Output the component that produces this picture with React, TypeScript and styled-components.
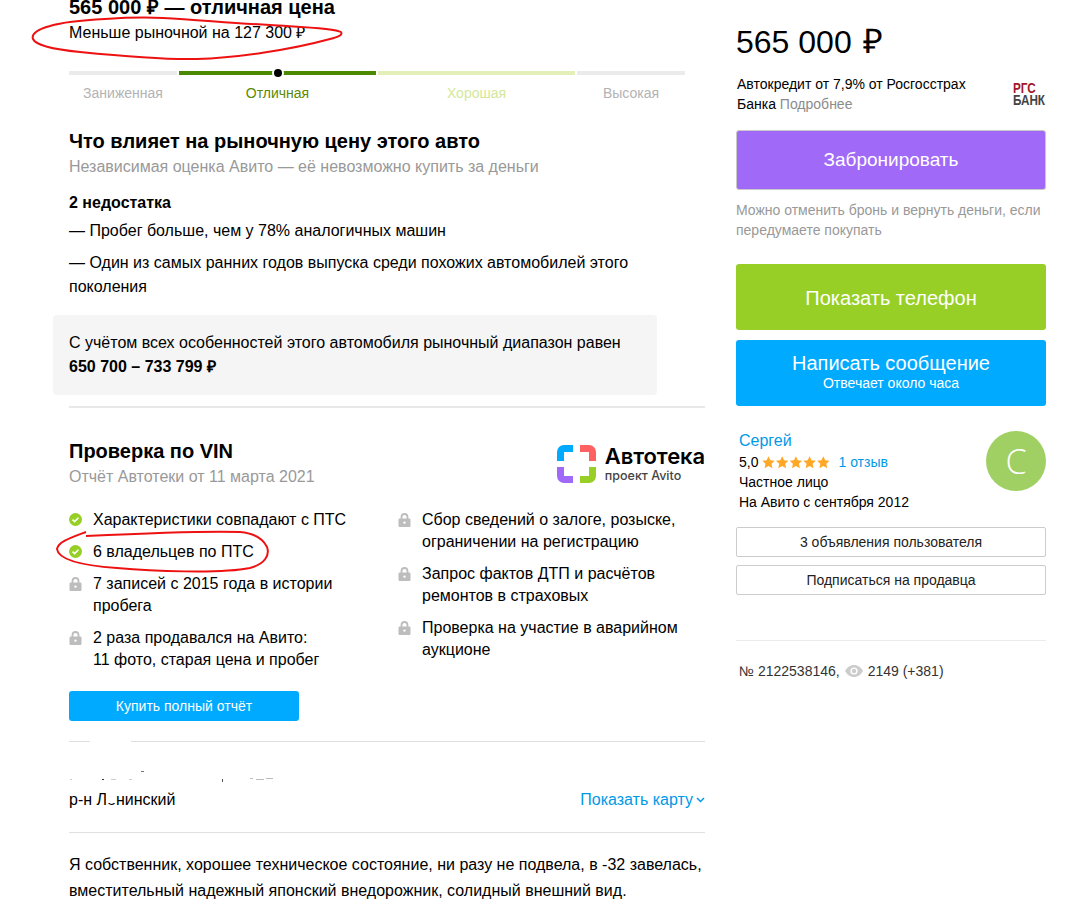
import React from "react";
import styled, { createGlobalStyle } from "styled-components";

const Global = createGlobalStyle`
  html, body { margin: 0; padding: 0; background: #fff; height: 922px; overflow: hidden; }
  body { font-family: "Liberation Sans", Arial, sans-serif; color: #000; }
  * { box-sizing: border-box; }
`;

const Page = styled.div`
  position: relative;
  width: 1089px;
  height: 922px;
  overflow: hidden;
  display: flex;
  align-items: flex-start;
  padding-left: 69px;
`;

const Left = styled.main`
  width: 636px;
  flex: none;
  margin-top: -7px;
`;

const Right = styled.aside`
  width: 310px;
  flex: none;
  margin-left: 31px;
  padding-top: 22px;
`;

const PriceTitle = styled.div`
  font-size: 20px;
  font-weight: 700;
  line-height: 28px;
`;

const PriceSub = styled.div`
  font-size: 16px;
  line-height: 22px;
  margin-top: 1px;
`;

const Scale = styled.div`
  display: grid;
  grid-template-columns: 108px 197px 197px 108px;
  column-gap: 2px;
  width: 616px;
  margin-top: 27px;
`;

const Segment = styled.div<{ $color: string; $text: string; $dot?: boolean }>`
  position: relative;
  text-align: center;
  color: ${(p) => p.$text};
  font-size: 14px;
  line-height: 18px;
  &::before {
    content: "";
    display: block;
    height: 4px;
    margin-bottom: 9px;
    background: ${(p) => p.$color};
  }
  ${(p) =>
    p.$dot &&
    `&::after {
      content: "";
      position: absolute;
      top: -2px;
      left: 95px;
      width: 8px;
      height: 8px;
      border-radius: 50%;
      background: #000;
      box-shadow: 0 0 0 2px #fff;
    }`}
`;

const SectionTitle = styled.h2`
  margin: 0;
  font-size: 20px;
  font-weight: 700;
  line-height: 28px;
`;

const Muted = styled.div`
  font-size: 16px;
  line-height: 22px;
  margin-top: 1px;
  color: #999;
`;

const InfluenceBlock = styled.section`
  margin-top: 25px;
`;

const FlawsTitle = styled.div`
  font-size: 16px;
  font-weight: 700;
  line-height: 22px;
  margin-top: 14px;
`;

const Flaw = styled.p`
  margin: 5px 0 0;
  font-size: 16px;
  line-height: 24px;
  &:last-of-type { margin-top: 8px; }
`;

const RangeBox = styled.div`
  margin: 16px 48px 0 -16px;
  height: 80px;
  padding: 16px 16px;
  background: #f5f5f5;
  border-radius: 4px;
  font-size: 16px;
  line-height: 24px;
`;

const RangeValue = styled.b`
  font-size: 16px;
`;

const ThickRule = styled.div`
  height: 2px;
  background: #e8e8e8;
  margin-top: 11px;
`;

const VinHead = styled.div`
  display: flex;
  justify-content: space-between;
  align-items: flex-start;
  margin-top: 29px;
`;

const LogoBox = styled.div`
  display: flex;
  align-items: center;
  gap: 9px;
  margin-top: 7px;
`;

const LogoText = styled.div`
  font-family: Inter, "Noto Sans", sans-serif;
`;

const LogoName = styled.div`
  font-size: 22px;
  font-weight: 600;
  line-height: 24px;
  letter-spacing: -0.1px;
`;

const LogoSub = styled.div`
  font-size: 12.5px;
  font-weight: 500;
  line-height: 15px;
  color: #444;
`;

const Checks = styled.div`
  display: grid;
  grid-template-columns: 329px 1fr;
  margin-top: 21px;
`;

const CheckCol = styled.ul`
  list-style: none;
  margin: 0;
  padding: 0;
  display: flex;
  flex-direction: column;
  gap: 10px;
`;

const CheckItem = styled.li`
  display: flex;
  gap: 11px;
  font-size: 16px;
  line-height: 22px;
  width: 300px;
  svg { flex: none; margin-top: 4px; }
`;

const BuyButton = styled.button`
  display: block;
  width: 230px;
  height: 30px;
  margin-top: 20px;
  border: 0;
  border-radius: 3px;
  background: #00aaff;
  color: #fff;
  font: 14px "Liberation Sans", Arial, sans-serif;
  padding: 0;
`;

const Rule = styled.div`
  height: 1px;
  background: #e0e0e0;
`;

const BuyRule = styled(Rule)`
  margin-top: 20px;
`;

const AddressRow = styled.div`
  position: relative;
  display: flex;
  justify-content: space-between;
  align-items: center;
  margin-top: 47px;
  font-size: 16px;
  line-height: 22px;
`;

const MapLink = styled.a`
  color: #0099e6;
  font-size: 16px;
  display: inline-flex;
  align-items: center;
  gap: 3px;
`;

const AddressRule = styled(Rule)`
  margin-top: 21px;
`;

const Description = styled.p`
  margin: 19px 0 0;
  font-size: 16px;
  line-height: 26px;
`;

const BigPrice = styled.div`
  height: 40px;
  font-size: 32px;
  line-height: 40px;
`;

const BigRouble = styled.span`
  font-size: 34px;
  line-height: 0;
  margin-left: 2px;
`;

const CreditRow = styled.div`
  display: flex;
  justify-content: space-between;
  align-items: flex-start;
  margin-top: 12px;
`;

const CreditText = styled.div`
  width: 250px;
  font-size: 14px;
  line-height: 20px;
  margin-left: 1px;
  span { color: #8c8c8c; }
`;

const BankLogo = styled.div`
  margin: 8px 3px 0 0;
  flex: none;
  width: 30px;
  font-weight: 700;
  font-size: 15px;
  line-height: 12px;
  color: #444;
  white-space: nowrap;
  transform: scaleX(0.78);
  transform-origin: left top;
`;

const BankFirst = styled.div`
  color: #a3162a;
`;

const ActionButton = styled.button<{ $bg: string; $h: number; $size?: number }>`
  display: flex;
  flex-direction: column;
  align-items: center;
  justify-content: center;
  width: 310px;
  height: ${(p) => p.$h}px;
  border: 0;
  border-radius: 3px;
  background: ${(p) => p.$bg};
  color: #fff;
  font-family: "Liberation Sans", Arial, sans-serif;
  font-size: ${(p) => p.$size ?? 20}px;
  line-height: 24px;
  padding: 0;
`;

const ReserveButton = styled(ActionButton)`
  margin-top: 16px;
  border: 1px solid #c9c9c9;
`;

const ReserveNote = styled.div`
  margin-top: 10px;
  font-size: 14px;
  line-height: 20px;
  color: #999;
`;

const PhoneButton = styled(ActionButton)`
  margin-top: 24px;
  padding-top: 2px;
`;

const MessageButton = styled(ActionButton)`
  margin-top: 10px;
  padding-bottom: 4px;
`;

const MessageHint = styled.span`
  font-size: 14px;
  line-height: 16px;
`;

const Seller = styled.div`
  display: flex;
  justify-content: space-between;
  margin-top: 25px;
`;

const SellerInfo = styled.div`
  font-size: 14px;
  line-height: 20px;
  margin-left: 3px;
`;

const SellerName = styled.a`
  display: block;
  color: #0099e6;
  font-size: 16px;
  line-height: 20px;
  margin-bottom: 1px;
`;

const Rating = styled.div`
  display: flex;
  align-items: center;
  gap: 4px;
`;

const ReviewLink = styled.a`
  color: #0099e6;
  margin-left: 4px;
`;

const Avatar = styled.div`
  width: 60px;
  height: 60px;
  border-radius: 50%;
  background: #a0d063;
  color: #fff;
  display: flex;
  align-items: center;
  justify-content: center;
  font-family: "Open Sans", sans-serif;
  font-weight: 300;
  font-size: 34px;
`;

const OutlineButton = styled.button`
  display: block;
  width: 310px;
  height: 30px;
  border: 1px solid #ccc;
  border-radius: 2px;
  background: #fff;
  color: #222;
  font: 14px "Liberation Sans", Arial, sans-serif;
  padding: 0;
  margin-top: 8px;
`;

const SubscribeBlock = styled.div`
  margin-top: 15px;
  ${OutlineButton}:first-child { margin-top: 0; }
`;

const SideRule = styled.div`
  height: 1px;
  background: #ebebeb;
  margin-top: 45px;
`;

const Meta = styled.div`
  display: flex;
  align-items: center;
  gap: 5px;
  margin-top: 20px;
  margin-left: 3px;
  font-size: 14px;
  line-height: 20px;
  color: #333;
`;

const Annotation = styled.svg`
  position: absolute;
  left: 0;
  top: 0;
  pointer-events: none;
`;

const WhitePatch = styled.div<{ $x: number; $y: number; $w: number; $h: number }>`
  position: absolute;
  left: ${(p) => p.$x}px;
  top: ${(p) => p.$y}px;
  width: ${(p) => p.$w}px;
  height: ${(p) => p.$h}px;
  background: #fff;
`;

const CheckIcon = () => (
  <svg width="13" height="13" viewBox="0 0 13 13">
    <circle cx="6.5" cy="6.5" r="6.5" fill="#97cf26" />
    <path d="M3.6 6.6l2 2 3.8-3.8" fill="none" stroke="#fff" strokeWidth="1.6" />
  </svg>
);

const LockIcon = () => (
  <svg width="13" height="14" viewBox="0 0 13 14">
    <path d="M3.5 6V4a3 3 0 0 1 6 0v2" fill="none" stroke="#bdbdbd" strokeWidth="1.8" />
    <rect x="0.5" y="5.6" width="12" height="8.4" rx="1.2" fill="#bdbdbd" />
    <circle cx="6.5" cy="9.6" r="1.2" fill="#fff" />
  </svg>
);

const AutotekaIcon = () => (
  <svg width="39" height="38" viewBox="0 0 39 38" fill="none" strokeWidth="7">
    <path d="M16 3.5H7a3.5 3.5 0 0 0-3.5 3.5v9" stroke="#00aaff" />
    <path d="M23 3.5h9a3.5 3.5 0 0 1 3.5 3.5v9" stroke="#ff6163" />
    <path d="M3.5 22v9a3.5 3.5 0 0 0 3.5 3.5h9" stroke="#a169f7" />
    <path d="M35.5 22v9a3.5 3.5 0 0 1-3.5 3.5h-9" stroke="#97cf26" />
  </svg>
);

const Stars = () => (
  <svg width="68" height="13" viewBox="0 0 68 13">
    {[0, 1, 2, 3, 4].map((i) => (
      <path
        key={i}
        transform={`translate(${i * 13.7} 0)`}
        d="M6.5 0.3l1.9 4 4.3.5-3.2 3 .9 4.4-3.9-2.2-3.9 2.2.9-4.4-3.2-3 4.3-.5z"
        fill="#ffa726"
      />
    ))}
  </svg>
);

const EyeIcon = () => (
  <svg width="18" height="12" viewBox="0 0 18 12">
    <path d="M9 0C5 0 1.8 2.6 0 6c1.8 3.4 5 6 9 6s7.200-2.600 9-6c-1.800-3.400-5-6-9-6z" fill="#ccc" />
    <circle cx="9" cy="6" r="3.6" fill="#fff" />
    <circle cx="9" cy="6" r="2.2" fill="#ccc" />
  </svg>
);

const Chevron = () => (
  <svg width="9" height="6" viewBox="0 0 9 6">
    <path d="M1 1l3.500 3.500L8 1" fill="none" stroke="#0099e6" strokeWidth="1.500" />
  </svg>
);

const Remnants = () => (
  <g stroke="none">
    <rect x="70" y="779" width="2" height="1" fill="#ccc" />
    <rect x="102" y="779" width="2" height="1" fill="#333" />
    <rect x="111" y="779" width="5" height="1" fill="#ccc" />
    <rect x="129" y="779" width="3" height="1" fill="#ccc" />
    <rect x="141" y="771" width="3" height="1" fill="#777" />
    <rect x="222" y="779" width="1" height="3" fill="#555" />
    <rect x="250" y="778" width="3" height="1" fill="#bbb" />
    <rect x="256" y="779" width="8" height="1" fill="#bbb" />
    <rect x="266" y="778" width="7" height="1" fill="#bbb" />
  </g>
);

export default function App() {
  return (
    <Page>
      <Global />
      <Left>
        <PriceTitle>565 000 ₽ — отличная цена</PriceTitle>
        <PriceSub>Меньше рыночной на 127 300 ₽</PriceSub>
        <Scale>
          <Segment $color="#ebebeb" $text="#b3b3b3">Заниженная</Segment>
          <Segment $color="#4b8a00" $text="#5c8a00" $dot>Отличная</Segment>
          <Segment $color="#e2f0b8" $text="#d3e89a">Хорошая</Segment>
          <Segment $color="#ebebeb" $text="#b3b3b3">Высокая</Segment>
        </Scale>
        <InfluenceBlock>
          <SectionTitle>Что влияет на рыночную цену этого авто</SectionTitle>
          <Muted>Независимая оценка Авито — её невозможно купить за деньги</Muted>
          <FlawsTitle>2 недостатка</FlawsTitle>
          <Flaw>— Пробег больше, чем у 78% аналогичных машин</Flaw>
          <Flaw>— Один из самых ранних годов выпуска среди похожих автомобилей этого поколения</Flaw>
          <RangeBox>
            С учётом всех особенностей этого автомобиля рыночный диапазон равен
            <br />
            <RangeValue>650 700 – 733 799 ₽</RangeValue>
          </RangeBox>
        </InfluenceBlock>
        <ThickRule />
        <VinHead>
          <div>
            <SectionTitle>Проверка по VIN</SectionTitle>
            <Muted>Отчёт Автотеки от 11 марта 2021</Muted>
          </div>
          <LogoBox>
            <AutotekaIcon />
            <LogoText>
              <LogoName>Автотека</LogoName>
              <LogoSub>проект Avito</LogoSub>
            </LogoText>
          </LogoBox>
        </VinHead>
        <Checks>
          <CheckCol>
            <CheckItem><CheckIcon />Характеристики совпадают с ПТС</CheckItem>
            <CheckItem><CheckIcon />6 владельцев по ПТС</CheckItem>
            <CheckItem><LockIcon />7 записей с 2015 года в истории пробега</CheckItem>
            <CheckItem><LockIcon /><span>2 раза продавался на Авито:<br />11 фото, старая цена и пробег</span></CheckItem>
          </CheckCol>
          <CheckCol>
            <CheckItem><LockIcon /><span>Сбор сведений о залоге, розыске, ограничении на регистрацию</span></CheckItem>
            <CheckItem><LockIcon />Запрос фактов ДТП и расчётов ремонтов в страховых</CheckItem>
            <CheckItem><LockIcon />Проверка на участие в аварийном аукционе</CheckItem>
          </CheckCol>
        </Checks>
        <BuyButton>Купить полный отчёт</BuyButton>
        <BuyRule />
        <AddressRow>
          <span>р-н Ленинский</span>
          <MapLink>Показать карту<Chevron /></MapLink>
        </AddressRow>
        <AddressRule />
        <Description>
          Я собственник, хорошее техническое состояние, ни разу не подвела, в -32 завелась, вместительный надежный японский внедорожник, солидный внешний вид.
        </Description>
      </Left>
      <Right>
        <BigPrice>565 000 <BigRouble>₽</BigRouble></BigPrice>
        <CreditRow>
          <CreditText>Автокредит от 7,9% от Росгосстрах Банка <span>Подробнее</span></CreditText>
          <BankLogo><BankFirst>РГС</BankFirst>БАНК</BankLogo>
        </CreditRow>
        <ReserveButton $bg="#a169f7" $h={60} $size={19}>Забронировать</ReserveButton>
        <ReserveNote>Можно отменить бронь и вернуть деньги, если передумаете покупать</ReserveNote>
        <PhoneButton $bg="#97cf26" $h={66}>Показать телефон</PhoneButton>
        <MessageButton $bg="#00aaff" $h={66}>
          Написать сообщение
          <MessageHint>Отвечает около часа</MessageHint>
        </MessageButton>
        <Seller>
          <SellerInfo>
            <SellerName>Сергей</SellerName>
            <Rating>5,0 <Stars /><ReviewLink>1 отзыв</ReviewLink></Rating>
            <div>Частное лицо</div>
            <div>На Авито с сентября 2012</div>
          </SellerInfo>
          <Avatar>С</Avatar>
        </Seller>
        <SubscribeBlock>
          <OutlineButton>3 объявления пользователя</OutlineButton>
          <OutlineButton>Подписаться на продавца</OutlineButton>
        </SubscribeBlock>
        <SideRule />
        <Meta>№ 2122538146, <EyeIcon /> 2149 (+381)</Meta>
      </Right>
      <WhitePatch $x={90} $y={738} $w={41} $h={6} />
      <WhitePatch $x={106} $y={792} $w={10} $h={11} />
      <Annotation width="1089" height="922" fill="none" stroke="#ee1111" strokeWidth="2">
        <Remnants />
        <path d="M105 19C85 20 63 22 50 26C38 29 31 34 33 39C36 46 60 50 80 52C110 55 160 60 197 59C235 58 290 50 330 39C338 37 343 35 341 32C335 28 300 27 270 25C230 23 200 20 163 18C140 17 120 18 105 19Z" />
        <path d="M86 532C70 538 58 542 57 549C58 558 75 565 117 568C150 571 220 574 250 568C265 564 270 555 267 547C262 537 252 533 240 532C210 531 150 533 86 536" />
      </Annotation>
    </Page>
  );
}
